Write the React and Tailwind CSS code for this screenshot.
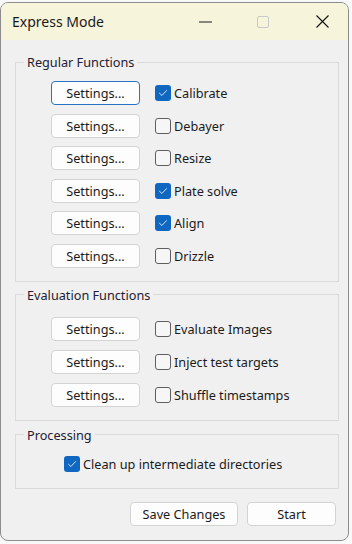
import React from "react";

function Check({ checked }) {
  if (checked) {
    return (
      <span className="flex h-[16px] w-[16px] shrink-0 items-center justify-center rounded-[3px] bg-[#0f67c2]">
        <svg width="10" height="8" viewBox="0 0 10 8" fill="none">
          <path d="M1.5 4.2 L3.9 6.5 L8.5 1.6" stroke="#d4e4f5" strokeWidth="1" strokeLinecap="round" strokeLinejoin="round" />
        </svg>
      </span>
    );
  }
  return <span className="h-[16px] w-[16px] shrink-0 rounded-[3px] border border-[#5e5e5e] bg-[#f6f6f6]" />;
}

function Btn({ children, focus, className = "" }) {
  return (
    <div
      className={
        "flex items-center justify-center rounded-[4px] bg-[#fdfdfd] text-[#1b1b1b] " +
        (focus ? "border border-[#2a72c4] " : "border border-[#d3d3d3] ") +
        className
      }
    >
      {children}
    </div>
  );
}

function Row({ label, checked, focus }) {
  return (
    <div className="flex h-[24px] items-center">
      <Btn focus={focus} className="h-[24px] w-[89px]">
        Settings...
      </Btn>
      <div className="ml-[15px] flex items-center gap-[3px]">
        <Check checked={checked} />
        <span className="text-[#1b1b1b]">{label}</span>
      </div>
    </div>
  );
}

function Group({ title, children, className = "" }) {
  return (
    <fieldset className={"ml-[14px] mr-[9px] min-w-0 border border-[#dadada] " + className}>
      <legend className="ml-[8px] px-[3px] text-[#1f2033]">{title}</legend>
      {children}
    </fieldset>
  );
}

export default function App() {
  return (
    <div
      className="h-[544px] w-[352px] overflow-hidden bg-[#f8f8f8] pt-[2px] text-[12.7px] leading-[18px]"
      style={{ fontFamily: '"Noto Sans", "Open Sans", sans-serif' }}
    >
      <div className="flex h-[539px] w-[349px] flex-col overflow-hidden rounded-[8px] border border-[#8c8c8c] bg-[#f0f0f0]">
        {/* Title bar */}
        <div className="flex h-[37px] shrink-0 items-center bg-[#f7f4dc]">
          <span className="ml-[11px] text-[14px] text-[#1a1a1a]">Express Mode</span>
          <div className="ml-auto flex items-center">
            <svg width="13" height="2" viewBox="0 0 13 2" className="mr-[45px]">
              <rect x="0" y="0.5" width="13" height="1" fill="#1a1a1a" />
            </svg>
            <svg width="12" height="12" viewBox="0 0 12 12" className="mr-[47px]">
              <rect x="0.5" y="0.5" width="11" height="11" rx="1.5" fill="none" stroke="#c9c9c9" strokeWidth="1" />
            </svg>
            <svg width="13" height="13" viewBox="0 0 13 13" className="mr-[19px]">
              <path d="M0.5 0.5 L12.5 12.5 M12.5 0.5 L0.5 12.5" stroke="#111" strokeWidth="1.1" />
            </svg>
          </div>
        </div>

        {/* Body */}
        <div className="mt-[13px] flex flex-col">
          <Group title="Regular Functions">
            <div className="flex flex-col gap-[8.6px] pb-[13px] pl-[35px] pt-[10px]">
              <Row label="Calibrate" checked focus />
              <Row label="Debayer" />
              <Row label="Resize" />
              <Row label="Plate solve" checked />
              <Row label="Align" checked />
              <Row label="Drizzle" />
            </div>
          </Group>

          <Group title="Evaluation Functions" className="mt-[4px]">
            <div className="flex flex-col gap-[9px] pb-[13px] pl-[35px] pt-[13px]">
              <Row label="Evaluate Images" />
              <Row label="Inject test targets" />
              <Row label="Shuffle timestamps" />
            </div>
          </Group>

          <Group title="Processing" className="mt-[5px]">
            <div className="flex items-center gap-[3px] pb-[15px] pl-[48px] pt-[11px]">
              <Check checked />
              <span className="text-[#1b1b1b]">Clean up intermediate directories</span>
            </div>
          </Group>

          <div className="mr-[12px] mt-[13px] flex justify-end gap-[9px]">
            <Btn className="h-[24px] w-[108px]">Save Changes</Btn>
            <Btn className="h-[24px] w-[89px]">Start</Btn>
          </div>
        </div>
      </div>
    </div>
  );
}
